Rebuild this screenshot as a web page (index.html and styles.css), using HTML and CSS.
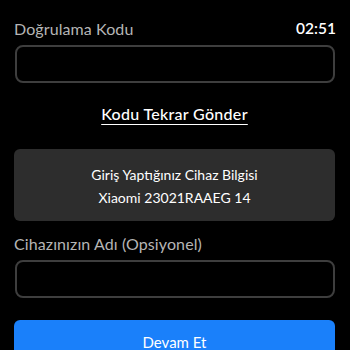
FILE: index.html
```html
<!DOCTYPE html>
<html>
<head>
<meta charset="utf-8">
<link rel="stylesheet" href="styles.css">
</head>
<body>
<div class="page">
  <div class="label-row">
    <span class="label">Doğrulama Kodu</span>
    <span class="timer">02:51</span>
  </div>
  <div class="input"></div>
  <div class="resend"><span>Kodu Tekrar Gönder</span></div>
  <div class="card">
    <div class="card-line">Giriş Yaptığınız Cihaz Bilgisi</div>
    <div class="card-line">Xiaomi 23021RAAEG 14</div>
  </div>
  <div class="label-row second">
    <span class="label">Cihazınızın Adı (Opsiyonel)</span>
  </div>
  <div class="input"></div>
  <div class="button">Devam Et</div>
</div>
</body>
</html>
```
FILE: styles.css
```css
html, body {
  margin: 0;
  padding: 0;
  background: #000;
  overflow: hidden;
}
.page {
  padding: 18px 15px 0 14px;
  font-family: "Lato", "Noto Sans", sans-serif;
  color: #fff;
  display: flex;
  flex-direction: column;
}
.label-row {
  display: flex;
  justify-content: space-between;
  align-items: center;
  height: 20px;
}
.label {
  color: #b5b5b5;
  font-size: 16px;
  letter-spacing: 0.1px;
}
.timer {
  color: #fff;
  font-size: 15.5px;
  font-weight: 600;
  margin-right: -1px;
}
.input {
  margin-top: 7px;
  height: 34px;
  border: 2px solid #3e3e3e;
  border-radius: 8px;
  margin-left: 1px;
}
.resend {
  margin-top: 21px;
  height: 20px;
  text-align: center;
  font-size: 16px;
  font-weight: 500;
  line-height: 20px;
  letter-spacing: 0.3px;
}
.resend span {
  text-decoration: underline;
  text-underline-offset: 4px;
  text-decoration-thickness: 1px;
}
.card {
  margin-top: 25px;
  height: 72px;
  background: #2d2d2d;
  border-radius: 6px;
  display: flex;
  flex-direction: column;
  justify-content: center;
  align-items: center;
  gap: 3px;
  font-size: 14px;
  padding-top: 2px;
  box-sizing: border-box;
}
.card-line {
  line-height: 20px;
}
.label-row.second {
  margin-top: 12px;
}
.button {
  margin-top: 22px;
  height: 44px;
  background: #1a80fa;
  border-radius: 6px;
  color: #fff;
  font-size: 15px;
  display: flex;
  align-items: center;
  justify-content: center;
}
```
